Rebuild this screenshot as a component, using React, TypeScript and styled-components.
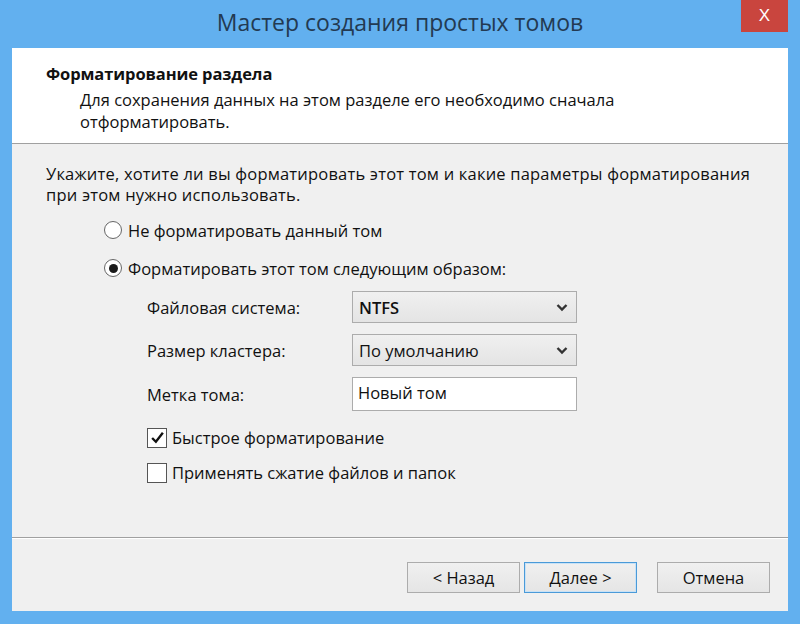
import React, { useState } from "react";
import styled, { createGlobalStyle } from "styled-components";

const GlobalStyle = createGlobalStyle`
    html, body {
        margin: 0;
        padding: 0;
        background: #62b0ef;
    }
    body {
        font-family: "Open Sans", "Noto Sans", "Liberation Sans", sans-serif;
        color: #111;
    }
`;

const Window = styled.div`
    width: 800px;
    height: 624px;
    box-sizing: border-box;
    background: #62b0ef;
    padding: 0 12px 13px 12px;
    display: flex;
    flex-direction: column;
`;

const TitleBar = styled.div`
    height: 48px;
    position: relative;
    display: flex;
    align-items: center;
    justify-content: center;
`;

const Title = styled.div`
    font-size: 23px;
    color: #233a52;
    margin-top: -4px;
`;

const CloseButton = styled.button`
    position: absolute;
    top: 0;
    right: 0;
    width: 47px;
    height: 32px;
    border: none;
    background: #c9453e;
    color: #fff;
    font-family: "Liberation Sans", sans-serif;
    font-size: 17px;
    padding: 0;
    display: flex;
    align-items: center;
    justify-content: center;
`;

const Client = styled.div`
    flex: 1;
    display: flex;
    flex-direction: column;
    background: #f0f0f0;
`;

const Header = styled.div`
    height: 96px;
    box-sizing: border-box;
    background: #fff;
    border-bottom: 1px solid #a0a0a0;
    padding: 15px 0 0 34px;
`;

const Heading = styled.div`
    font-size: 16.5px;
    font-weight: 700;
    line-height: 22px;
    letter-spacing: -0.1px;
`;

const SubText = styled.div`
    font-size: 16.5px;
    line-height: 22px;
    margin: 4px 0 0 34px;
`;

const Body = styled.div`
    flex: 1;
    padding: 19px 0 0 34px;
    border-bottom: 1px solid #a0a0a0;
    box-shadow: 0 1px 0 #fff;
`;

const Intro = styled.div`
    font-size: 16.5px;
    line-height: 21px;
    width: 705px;
    margin-bottom: 6px;
    letter-spacing: 0.2px;
`;

const RadioRow = styled.label`
    display: flex;
    align-items: center;
    gap: 6px;
    margin-left: 58px;
    font-size: 16.5px;
    height: 38px;
    flex-shrink: 0;
`;

const RadioCircle = styled.span<{ $checked?: boolean }>`
    width: 16px;
    height: 16px;
    border: 1px solid #666;
    border-radius: 50%;
    background: #fff;
    display: flex;
    align-items: center;
    justify-content: center;
    &::after {
        content: "";
        width: 9px;
        height: 9px;
        border-radius: 50%;
        background: ${(p) => (p.$checked ? "#1a1a1a" : "transparent")};
    }
`;

const FormGrid = styled.div`
    display: grid;
    grid-template-columns: 205px 225px;
    grid-template-rows: 32px 32px 34px;
    row-gap: 11px;
    margin: 4px 0 0 101px;
    align-items: center;
`;

const FieldLabel = styled.div`
    font-size: 16.5px;
`;

const Select = styled.div`
    height: 32px;
    box-sizing: border-box;
    border: 1px solid #acacac;
    background: linear-gradient(#f0f0f0, #e4e4e4);
    display: flex;
    align-items: center;
    justify-content: space-between;
    padding: 0 8px 0 6px;
    font-size: 16.5px;
`;

const SelectValue = styled.span<{ $bold?: boolean }>`
    font-weight: ${(p) => (p.$bold ? 600 : 400)};
`;

const TextBox = styled.div`
    height: 34px;
    box-sizing: border-box;
    border: 1px solid #acacac;
    background: #fff;
    font-size: 16.5px;
    padding: 3px 5px;
`;

const Checks = styled.div`
    margin: 15px 0 0 101px;
    display: flex;
    flex-direction: column;
    gap: 12px;
`;

const CheckRow = styled.label`
    display: flex;
    align-items: center;
    gap: 5px;
    font-size: 16.5px;
`;

const CheckBox = styled.span`
    width: 20px;
    height: 20px;
    box-sizing: border-box;
    border: 1px solid #555;
    background: #fff;
    display: flex;
    align-items: center;
    justify-content: center;
`;

const Footer = styled.div`
    height: 73px;
    box-sizing: border-box;
    display: flex;
    align-items: flex-start;
    justify-content: flex-end;
    padding: 24px 18px 0 0;
`;

const Button = styled.button<{ $focused?: boolean; $gap?: number }>`
    width: 113px;
    height: 31px;
    margin-left: ${(p) => p.$gap ?? 0}px;
    border: 1px solid ${(p) => (p.$focused ? "#4a9ad8" : "#acacac")};
    box-shadow: ${(p) => (p.$focused ? "inset 0 0 0 1px #c9e2f6" : "none")};
    background: linear-gradient(#f0f0f0, #e5e5e5);
    font-family: inherit;
    font-size: 16.5px;
    color: #111;
    padding: 0;
`;

const Chevron = () => (
    <svg width="12" height="9" viewBox="0 0 12 9">
        <path d="M1.5 2 L6 6.5 L10.5 2" fill="none" stroke="#333" strokeWidth="2.4" />
    </svg>
);

const Tick = () => (
    <svg width="15" height="15" viewBox="0 0 14 14">
        <path d="M2 7.5 L5.5 11 L12 2.5" fill="none" stroke="#111" strokeWidth="2.2" />
    </svg>
);

export default function App() {
    const [mode, setMode] = useState<"skip" | "format">("format");
    const [quick, setQuick] = useState(true);
    const [compress, setCompress] = useState(false);

    return (
        <>
            <GlobalStyle />
            <Window>
                <TitleBar>
                    <Title>Мастер создания простых томов</Title>
                    <CloseButton>X</CloseButton>
                </TitleBar>
                <Client>
                    <Header>
                        <Heading>Форматирование раздела</Heading>
                        <SubText>
                            Для сохранения данных на этом разделе его необходимо сначала
                            <br />
                            отформатировать.
                        </SubText>
                    </Header>
                    <Body>
                        <Intro>
                            Укажите, хотите ли вы форматировать этот том и какие параметры форматирования
                            при этом нужно использовать.
                        </Intro>
                        <RadioRow onClick={() => setMode("skip")}>
                            <RadioCircle $checked={mode === "skip"} />
                            Не форматировать данный том
                        </RadioRow>
                        <RadioRow onClick={() => setMode("format")}>
                            <RadioCircle $checked={mode === "format"} />
                            Форматировать этот том следующим образом:
                        </RadioRow>
                        <FormGrid>
                            <FieldLabel>Файловая система:</FieldLabel>
                            <Select>
                                <SelectValue $bold>NTFS</SelectValue>
                                <Chevron />
                            </Select>
                            <FieldLabel>Размер кластера:</FieldLabel>
                            <Select>
                                <SelectValue>По умолчанию</SelectValue>
                                <Chevron />
                            </Select>
                            <FieldLabel>Метка тома:</FieldLabel>
                            <TextBox>Новый том</TextBox>
                        </FormGrid>
                        <Checks>
                            <CheckRow onClick={() => setQuick(!quick)}>
                                <CheckBox>{quick && <Tick />}</CheckBox>
                                Быстрое форматирование
                            </CheckRow>
                            <CheckRow onClick={() => setCompress(!compress)}>
                                <CheckBox>{compress && <Tick />}</CheckBox>
                                Применять сжатие файлов и папок
                            </CheckRow>
                        </Checks>
                    </Body>
                    <Footer>
                        <Button>&lt; Назад</Button>
                        <Button $focused $gap={4}>Далее &gt;</Button>
                        <Button $gap={20}>Отмена</Button>
                    </Footer>
                </Client>
            </Window>
        </>
    );
}
